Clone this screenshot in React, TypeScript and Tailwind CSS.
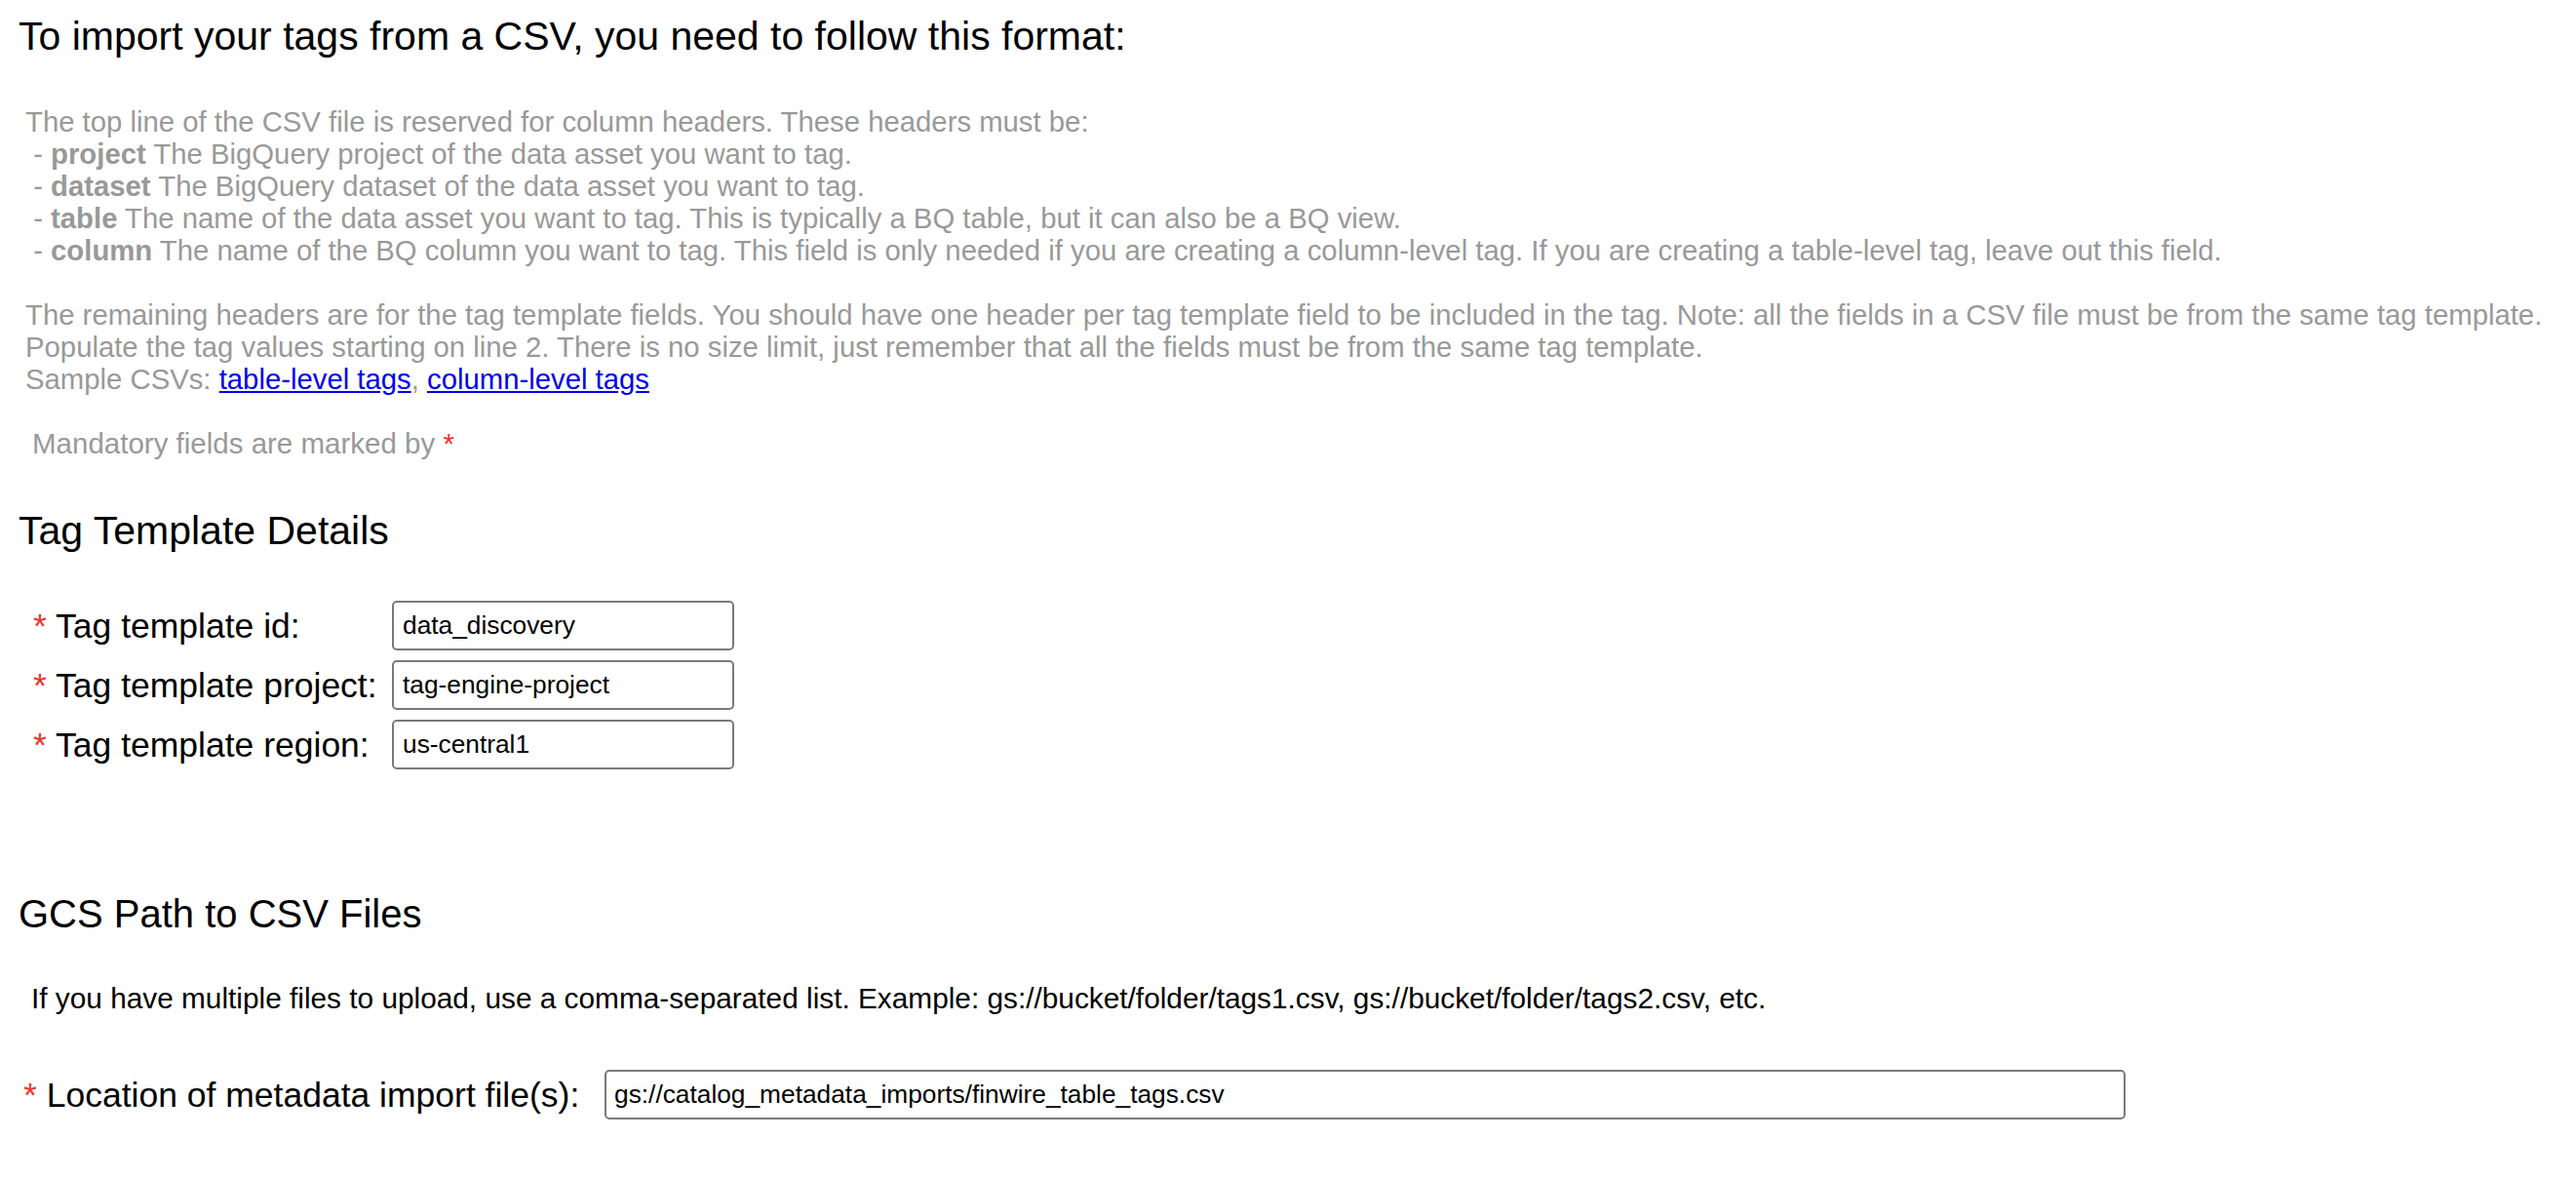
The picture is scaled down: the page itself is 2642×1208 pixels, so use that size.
import React from "react";

const gray = "text-[#999999]";

function Req() {
  return <span className="text-[#e8382b]">*</span>;
}

function FieldRow({ label, value }: { label: string; value: string }) {
  return (
    <div className="flex items-center pl-[15px]">
      <div className="w-[368px] shrink-0 text-[35.5px] leading-[40px] text-black whitespace-nowrap">
        <Req /> {label}
      </div>
      <input
        readOnly
        defaultValue={value}
        className="w-[351px] h-[51px] border-2 border-[#7a7a7a] rounded-[5px] px-[9px] text-[26.3px] text-black bg-white outline-none"
      />
    </div>
  );
}

export default function App() {
  return (
    <div
      className="min-h-screen bg-white pl-[19px] pt-[14px] text-black"
      style={{ fontFamily: '"Liberation Sans", Arial, Helvetica, sans-serif' }}
    >
      <h1 className="text-[41px] leading-[46px] font-normal whitespace-nowrap">
        To import your tags from a CSV, you need to follow this format:
      </h1>

      <div className={`mt-[48px] pl-[7px] text-[29.3px] leading-[33px] ${gray}`}>
        <div className="whitespace-nowrap">
          The top line of the CSV file is reserved for column headers. These headers must be:
        </div>
        <div className="whitespace-nowrap">
          {"\u00a0- "}<b className="font-bold">project</b> The BigQuery project of the data asset you want to tag.
        </div>
        <div className="whitespace-nowrap">
          {"\u00a0- "}<b className="font-bold">dataset</b> The BigQuery dataset of the data asset you want to tag.
        </div>
        <div className="whitespace-nowrap">
          {"\u00a0- "}<b className="font-bold">table</b> The name of the data asset you want to tag. This is typically a BQ table, but it can also be a BQ view.
        </div>
        <div className="whitespace-nowrap">
          {"\u00a0- "}<b className="font-bold">column</b> The name of the BQ column you want to tag. This field is only needed if you are creating a column-level tag. If you are creating a table-level tag, leave out this field.
        </div>
        <div className="h-[33px]" />
        <div className="whitespace-nowrap">
          The remaining headers are for the tag template fields. You should have one header per tag template field to be included in the tag. Note: all the fields in a CSV file must be from the same tag template.
        </div>
        <div className="whitespace-nowrap">
          Populate the tag values starting on line 2. There is no size limit, just remember that all the fields must be from the same tag template.
        </div>
        <div className="whitespace-nowrap">
          Sample CSVs:{" "}
          <a href="#" className="text-[#0000ee] underline">table-level tags</a>,{" "}
          <a href="#" className="text-[#0000ee] underline">column-level tags</a>
        </div>
      </div>

      <div className={`mt-[33px] pl-[14px] text-[29.5px] leading-[33px] ${gray} whitespace-nowrap`}>
        Mandatory fields are marked by <Req />
      </div>

      <h2 className="mt-[50px] text-[41px] leading-[46px] font-normal">Tag Template Details</h2>

      <div className="mt-[49px] flex flex-col gap-[10px]">
        <FieldRow label="Tag template id:" value="data_discovery" />
        <FieldRow label="Tag template project:" value="tag-engine-project" />
        <FieldRow label="Tag template region:" value="us-central1" />
      </div>

      <h2 className="mt-[125px] text-[40px] leading-[46px] font-normal">GCS Path to CSV Files</h2>

      <div className="mt-[47px] pl-[13px] text-[29.8px] leading-[33px] whitespace-nowrap">
        If you have multiple files to upload, use a comma-separated list. Example: gs://bucket/folder/tags1.csv, gs://bucket/folder/tags2.csv, etc.
      </div>

      <div className="mt-[57px] flex items-center pl-[5px]">
        <div className="w-[596px] shrink-0 text-[35.5px] leading-[40px] whitespace-nowrap">
          <Req /> Location of metadata import file(s):
        </div>
        <input
          readOnly
          defaultValue="gs://catalog_metadata_imports/finwire_table_tags.csv"
          className="w-[1560px] h-[51px] border-2 border-[#7a7a7a] rounded-[5px] px-[8px] text-[26.3px] text-black bg-white outline-none"
        />
      </div>
    </div>
  );
}
